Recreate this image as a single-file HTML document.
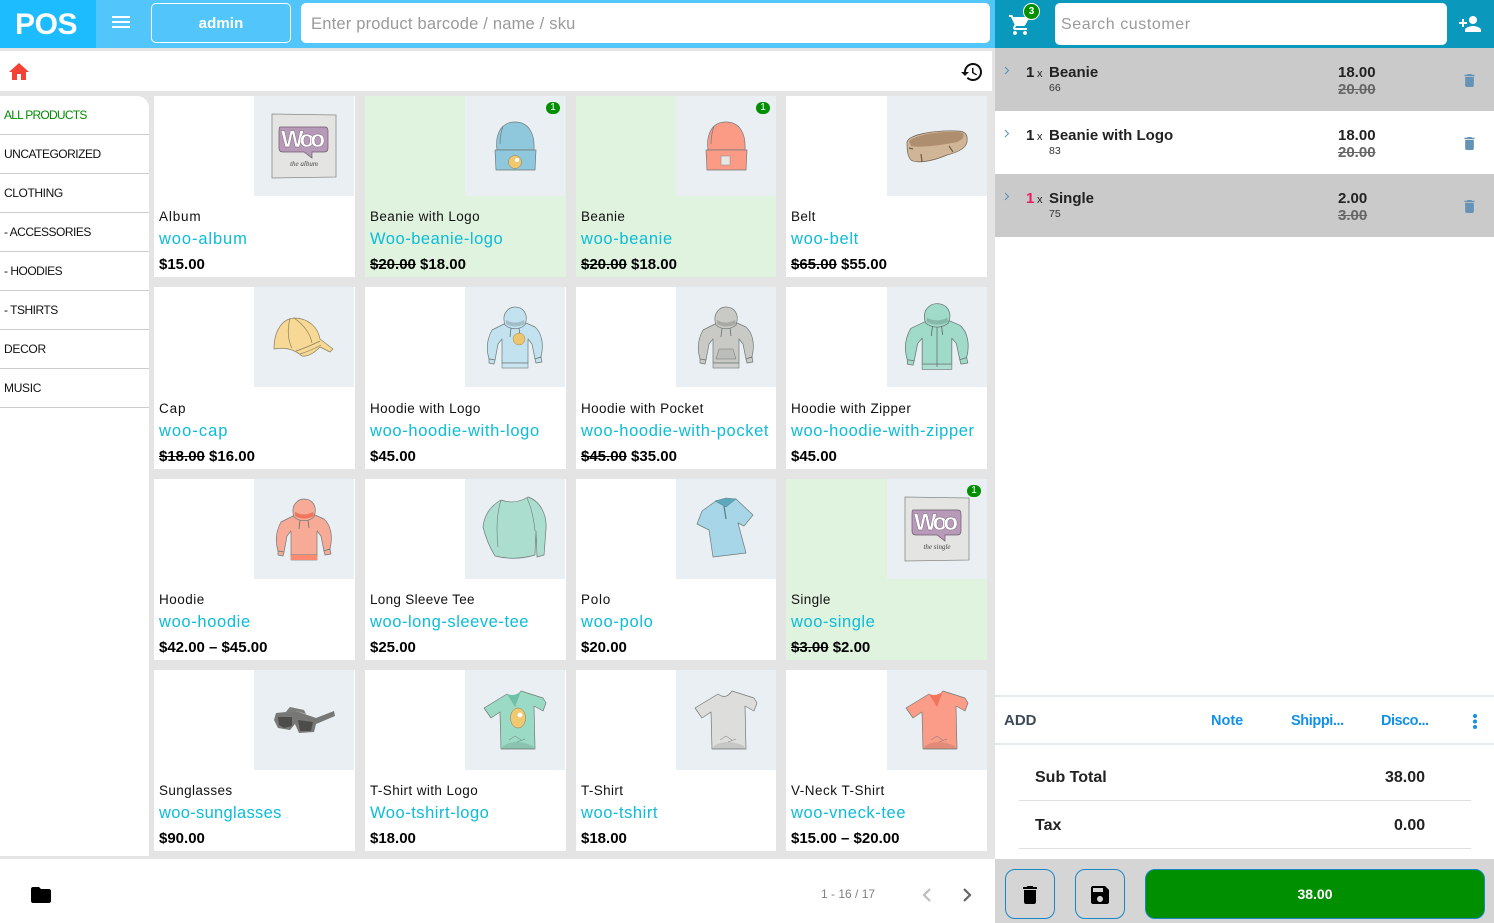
<!DOCTYPE html>
<html lang="en"><head><meta charset="utf-8"><title>POS</title>
<style>
*{box-sizing:border-box}
html,body{margin:0;padding:0;width:1494px;height:923px;overflow:hidden;background:#e4e4e4;font-family:"Liberation Sans",sans-serif;color:#000}
.a{position:absolute}
svg{display:block}
.side div{position:absolute;left:0;width:149px;height:39px;border-bottom:1px solid #ccc;font-size:12px;line-height:38px;padding-left:4px;color:#111;white-space:nowrap;letter-spacing:-.5px}
.card{position:absolute;background:#fff;overflow:hidden}
.card.g{background:#dff3df}
.card .im{position:absolute;right:0;top:0;width:100px;height:100px;background:#e9eff3}
.card .im svg{filter:blur(.3px)}
.c1 .im,.c2 .im{right:1px}
.card .n{position:absolute;left:5px;font-size:13.5px;line-height:18px;color:#111;white-space:nowrap;letter-spacing:.37px}
.card .s{position:absolute;left:5px;font-size:16.5px;line-height:22px;color:#0cbcd8;white-space:nowrap;letter-spacing:.6px}
.card .p{position:absolute;left:5px;font-size:15px;font-weight:700;line-height:18px;white-space:nowrap}
.r1 .n,.r3 .n,.r4 .n{top:112px}.r1 .s,.r3 .s,.r4 .s{top:132px}.r1 .p,.r3 .p,.r4 .p{top:160px}
.r2 .n{top:113px}.r2 .s{top:133px}.r2 .p{top:161px}
.bd{position:absolute;right:6px;top:6px;width:14px;height:12px;border-radius:6px;background:#008f00;color:#fff;font-size:10px;line-height:12px;text-align:center}
.rw{position:absolute;left:995px;width:499px;height:63px}
.rw .ch{position:absolute;left:9px;top:18px}
.rw .q{position:absolute;left:31px;top:16px;font-size:15px;font-weight:700;color:#222}
.rw .x{position:absolute;left:42px;top:20px;font-size:11px;color:#222}
.rw .t{position:absolute;left:54px;top:16px;font-size:15px;font-weight:700;color:#222;white-space:nowrap}
.rw .id{position:absolute;left:54px;top:34px;font-size:10.5px;color:#333}
.rw .pr{position:absolute;left:343px;top:16px;font-size:15px;font-weight:700;color:#222}
.rw .old{position:absolute;left:343px;top:33px;font-size:15px;font-weight:700;color:#666;text-decoration:line-through}
.rw .tr{position:absolute;left:468px;top:26px}
.lk{position:absolute;top:713px;font-size:14.5px;font-weight:700;color:#1390ea;white-space:nowrap}
</style></head><body>

<svg width="0" height="0" style="position:absolute">
<defs>
<symbol id="hood" viewBox="0 0 100 100">
<g stroke="#6f7a78" stroke-width=".7" fill="currentColor" stroke-linejoin="round">
<path d="M39 37 27 43C22 52 21 62 24 72L30 73 33 57 37 52 37 76H63L63 52 67 57 70 72 76 70C79 58 77 46 70 40L61 36Z"/>
<path d="M40 38C36 26 44 20 50 20 58 20 64 27 60 38 54 43 46 43 40 38Z"/>
<path d="M37 76H63V81H37Z" opacity=".85"/>
<path d="M24 72 30 73 29 77 24 76Z"/><path d="M70 72 76 70 77 75 71 76Z"/>
</g>
<path d="M41 33Q50 38 59 33L60 37Q50 42 41 37Z" fill="#000" opacity=".16"/>
<path d="M46 41 45 50M54 41 55 49" stroke="#66706f" stroke-width=".8" fill="none"/>
</symbol>
<symbol id="tee" viewBox="0 0 100 100">
<path d="M42 24Q50 30 56 21L78 28 81 33 78 41 69 36 70 79 36 79 35 42 26 48 19 38Z" fill="currentColor" stroke="#6f7a78" stroke-width=".7" stroke-linejoin="round"/>
<path d="M38 76Q50 68 68 76L69 79H37Z" fill="#000" opacity=".1"/>
<path d="M44 70 50 66 56 70M52 72 60 69" stroke="#6f7a78" stroke-width=".5" fill="none"/>
</symbol>
<symbol id="bean" viewBox="0 0 100 100">
<g fill="currentColor" stroke="#6f7a78" stroke-width=".7" stroke-linejoin="round">
<path d="M32 54C30 38 36 26 50 26 64 26 70 38 69 54Z"/>
<path d="M30 54H71L70 74H31Z"/>
</g>
<path d="M38 30C36 36 35 42 35 48" stroke="#6f7a78" stroke-width=".7" fill="none"/>
</symbol>
<symbol id="alb" viewBox="0 0 100 100">
<path d="M18 18 82 19 82 81 18 82Z" fill="#e4e4e2" stroke="#8a8a8a" stroke-width=".8"/>
<path d="M26 31H71Q74 31 74 35V52Q74 56 70 56H58L58 62 50 56H29Q25 56 25 52V35Q25 31 26 31Z" fill="#b79ab8" stroke="#6f5a70" stroke-width=".7"/>
</symbol>
</defs>
</svg>

<!-- left top bar -->
<div class="a" style="left:0;top:0;width:995px;height:48px;background:#52c6fa"></div>
<div class="a" style="left:0;top:1px;width:96px;height:48px;background:transparent;color:#fff;font-size:30px;font-weight:700;line-height:48px;padding-left:15px;letter-spacing:-.4px;z-index:2">POS</div>
<div class="a" style="left:0;top:0;width:96px;height:48px;background:#1dbbff"></div>
<svg class="a" style="left:109px;top:10px" width="24" height="24" viewBox="0 0 24 24" fill="#fff"><path d="M3 18h18v-2H3v2zm0-5h18v-2H3v2zm0-7v2h18V6H3z"/></svg>
<div class="a" style="left:151px;top:3px;width:140px;height:40px;border:1px solid #fff;border-radius:5px;color:#fff;font-size:15px;font-weight:700;text-align:center;line-height:40px;letter-spacing:.1px">admin</div>
<div class="a" style="left:301px;top:3px;width:689px;height:40px;background:#fff;border-radius:5px;color:#9a9a9a;font-size:16.5px;line-height:43px;padding-left:10px;letter-spacing:.2px">Enter product barcode / name / sku</div>

<!-- toolbar -->
<div class="a" style="left:0;top:51px;width:992px;height:40px;background:#fff"></div>
<svg class="a" style="left:7px;top:60px" width="24" height="24" viewBox="0 0 24 24" fill="#f44336"><path d="M10 20v-6h4v6h5v-8h3L12 3 2 12h3v8z"/></svg>
<svg class="a" style="left:960px;top:60px" width="24" height="24" viewBox="0 0 24 24" fill="#111"><path d="M13 3c-4.97 0-9 4.03-9 9H1l3.89 3.89.07.14L9 12H6c0-3.87 3.13-7 7-7s7 3.13 7 7-3.13 7-7 7c-1.93 0-3.68-.79-4.94-2.06l-1.42 1.42C8.27 19.99 10.51 21 13 21c4.97 0 9-4.03 9-9s-4.03-9-9-9zm-1 5v5l4.28 2.54.72-1.21-3.5-2.08V8H12z"/></svg>

<!-- sidebar -->
<div class="a side" style="left:0;top:96px;width:149px;height:760px;background:#fff;border-radius:0 12px 0 0">
<div style="top:0;color:#008a00;letter-spacing:-.75px">ALL PRODUCTS</div>
<div style="top:39px">UNCATEGORIZED</div>
<div style="top:78px;letter-spacing:-.4px">CLOTHING</div>
<div style="top:117px">- ACCESSORIES</div>
<div style="top:156px">- HOODIES</div>
<div style="top:195px">- TSHIRTS</div>
<div style="top:234px;letter-spacing:-.3px">DECOR</div>
<div style="top:273px;letter-spacing:-.3px">MUSIC</div>
</div>

<!-- Row 1 -->
<div class="card c1 r1" style="left:154px;top:96px;width:201px;height:181px"><div class="im"><svg width="100" height="100"><use href="#alb" width="100" height="100"/><text x="49" y="51" font-size="24" font-weight="700" fill="#fff" stroke="#6f5a70" stroke-width=".4" text-anchor="middle" font-family="Liberation Sans" textLength="44">Woo</text><text x="50" y="70" font-size="7" fill="#444" text-anchor="middle" font-family="Liberation Serif" font-style="italic">the album</text></svg></div><div class="n" style="letter-spacing:.85px">Album</div><div class="s" style="letter-spacing:.89px">woo-album</div><div class="p">$15.00</div></div>

<div class="card c2 g r1" style="left:365px;top:96px;width:201px;height:181px"><div class="im"><svg width="100" height="100" style="color:#8fc7dc"><use href="#bean" width="100" height="100"/><circle cx="50" cy="66" r="6.5" fill="#f0c870" stroke="#8a7a50" stroke-width=".5"/><circle cx="52" cy="64" r="2" fill="#fff"/></svg></div><div class="bd">1</div><div class="n" style="letter-spacing:.4px">Beanie with Logo</div><div class="s" style="letter-spacing:.52px">Woo-beanie-logo</div><div class="p"><s>$20.00</s> $18.00</div></div>

<div class="card g r1" style="left:576px;top:96px;width:200px;height:181px"><div class="im"><svg width="100" height="100" style="color:#fb9b86"><use href="#bean" width="100" height="100"/><rect x="45" y="60" width="9" height="9" fill="#e6e6e2" stroke="#888" stroke-width=".5"/></svg></div><div class="bd">1</div><div class="n">Beanie</div><div class="s" style="letter-spacing:.65px">woo-beanie</div><div class="p"><s>$20.00</s> $18.00</div></div>

<div class="card r1" style="left:786px;top:96px;width:201px;height:181px"><div class="im"><svg width="100" height="100"><path d="M20 46C22 38 50 34 70 35 78 35 81 38 80 46 79 52 72 56 60 59 46 65 30 68 24 64 20 60 20 52 20 46Z" fill="#d0b596" stroke="#6d5f50" stroke-width=".7"/><path d="M22 45C30 38 55 35 72 36 79 37 78 43 70 46 55 49 35 52 24 50Z" fill="#ad8e6e"/><path d="M22 52 26 53M34 58 35 66M62 50 66 56" stroke="#6d5f50" stroke-width="1.2" fill="none"/></svg></div><div class="n">Belt</div><div class="s" style="letter-spacing:.7px">woo-belt</div><div class="p"><s>$65.00</s> $55.00</div></div>

<!-- Row 2 -->
<div class="card c1 r2" style="left:154px;top:287px;width:201px;height:182px"><div class="im"><svg width="100" height="100"><path d="M20 62C20 44 28 32 40 31 54 31 64 40 66 52L79 62 76 65 66 60C60 66 54 70 48 69 40 62 30 60 20 62Z" fill="#f7d894" stroke="#8a7f62" stroke-width=".7" stroke-linejoin="round"/><path d="M36 32C33 42 34 54 38 61M40 31C50 38 56 46 58 56M42 64Q54 60 66 54M46 67Q56 64 67 58" stroke="#8a7f62" stroke-width=".7" fill="none"/></svg></div><div class="n" style="letter-spacing:.9px">Cap</div><div class="s" style="letter-spacing:1.02px">woo-cap</div><div class="p"><s>$18.00</s> $16.00</div></div>

<div class="card c2 r2" style="left:365px;top:287px;width:201px;height:182px"><div class="im"><svg width="100" height="100" style="color:#c3e2f0"><use href="#hood" width="100" height="100"/><circle cx="54" cy="52" r="6" fill="#eec56f" stroke="#8a7a50" stroke-width=".4"/></svg></div><div class="n" style="letter-spacing:.4px">Hoodie with Logo</div><div class="s" style="letter-spacing:.65px">woo-hoodie-with-logo</div><div class="p">$45.00</div></div>

<div class="card r2" style="left:576px;top:287px;width:200px;height:182px"><div class="im"><svg width="100" height="100" style="color:#c9c9c5"><use href="#hood" width="100" height="100"/><path d="M40 72 43 62H57L60 72Z" fill="#bcbcb8" stroke="#6f7a78" stroke-width=".5"/></svg></div><div class="n" style="letter-spacing:.4px">Hoodie with Pocket</div><div class="s" style="letter-spacing:.63px">woo-hoodie-with-pocket</div><div class="p"><s>$45.00</s> $35.00</div></div>

<div class="card r2" style="left:786px;top:287px;width:201px;height:182px"><div class="im"><svg width="100" height="100" style="color:#a0dbc9"><g transform="translate(-7 -5) scale(1.14 1.08)"><use href="#hood" width="100" height="100"/></g><path d="M50 40V80" stroke="#6f7a78" stroke-width=".9"/></svg></div><div class="n" style="letter-spacing:.43px">Hoodie with Zipper</div><div class="s" style="letter-spacing:.59px">woo-hoodie-with-zipper</div><div class="p">$45.00</div></div>

<!-- Row 3 -->
<div class="card c1 r3" style="left:154px;top:479px;width:201px;height:181px"><div class="im"><svg width="100" height="100" style="color:#f7ab96"><use href="#hood" width="100" height="100"/><path d="M37 76H63V81H37Z" fill="#fb8a70"/><path d="M41 33Q50 38 59 33L60 37Q50 42 41 37Z" fill="#f0755c"/></svg></div><div class="n" style="letter-spacing:.5px">Hoodie</div><div class="s" style="letter-spacing:.65px">woo-hoodie</div><div class="p">$42.00 – $45.00</div></div>

<div class="card c2 r3" style="left:365px;top:479px;width:201px;height:181px"><div class="im"><svg width="100" height="100"><path d="M36 21Q50 26 63 18C75 22 82 35 81 50L79 76 72 78 71 52 70 76Q50 82 30 77 22 64 18 48 20 30 36 21Z" fill="#abdecf" stroke="#6f7a78" stroke-width=".7" stroke-linejoin="round"/><path d="M36 21Q30 40 33 68M62 19Q68 32 70 52" stroke="#6f7a78" stroke-width=".6" fill="none"/></svg></div><div class="n" style="letter-spacing:.3px">Long Sleeve Tee</div><div class="s" style="letter-spacing:.55px">woo-long-sleeve-tee</div><div class="p">$25.00</div></div>

<div class="card r3" style="left:576px;top:479px;width:200px;height:181px"><div class="im"><svg width="100" height="100"><path d="M40 22 26 32 21 45 33 51 37 78 70 74 62 44 68 47 77 36 60 20Z" fill="#a6d6e7" stroke="#6f7a78" stroke-width=".7" stroke-linejoin="round"/><path d="M39 22 50 19 60 20 50 28Z" fill="#5ea8bd" stroke="#5a7a80" stroke-width=".5"/><path d="M48 27 50 40" stroke="#5a7a80" stroke-width="1.2"/></svg></div><div class="n" style="letter-spacing:.75px">Polo</div><div class="s" style="letter-spacing:.7px">woo-polo</div><div class="p">$20.00</div></div>

<div class="card g r3" style="left:786px;top:479px;width:201px;height:181px"><div class="im"><svg width="100" height="100"><use href="#alb" width="100" height="100"/><text x="49" y="51" font-size="24" font-weight="700" fill="#fff" stroke="#6f5a70" stroke-width=".4" text-anchor="middle" font-family="Liberation Sans" textLength="44">Woo</text><text x="50" y="70" font-size="7" fill="#444" text-anchor="middle" font-family="Liberation Serif" font-style="italic">the single</text></svg></div><div class="bd">1</div><div class="n">Single</div><div class="s" style="letter-spacing:.55px">woo-single</div><div class="p"><s>$3.00</s> $2.00</div></div>

<!-- Row 4 -->
<div class="card c1 r4" style="left:154px;top:670px;width:201px;height:181px"><div class="im"><svg width="100" height="100"><path d="M22 43 42 41 62 48 80 41 81 46 62 54 60 62 45 63 41 54 36 60 24 58 20 50Z" fill="#777775"/><path d="M30 44 36 37 50 40 52 44 42 41Z" fill="#7c7c7a"/><path d="M24 47 38 47 38 56 30 58 25 55ZM44 50 59 52 57 61 46 61Z" fill="#4c4c4b"/></svg></div><div class="n" style="letter-spacing:.37px">Sunglasses</div><div class="s" style="letter-spacing:.31px">woo-sunglasses</div><div class="p">$90.00</div></div>

<div class="card c2 r4" style="left:365px;top:670px;width:201px;height:181px"><div class="im"><svg width="100" height="100" style="color:#9bdac4"><use href="#tee" width="100" height="100"/><path d="M42 24 50 37 56 21Q50 27 42 24Z" fill="#6fc0a6"/><ellipse cx="53" cy="48" rx="7.5" ry="10" fill="#f0c870" stroke="#8a7a50" stroke-width=".5"/><circle cx="55" cy="45" r="2.4" fill="#fff"/></svg></div><div class="n" style="letter-spacing:.4px">T-Shirt with Logo</div><div class="s" style="letter-spacing:.52px">Woo-tshirt-logo</div><div class="p">$18.00</div></div>

<div class="card r4" style="left:576px;top:670px;width:200px;height:181px"><div class="im"><svg width="100" height="100" style="color:#dddddb"><use href="#tee" width="100" height="100"/></svg></div><div class="n">T-Shirt</div><div class="s" style="letter-spacing:.55px">woo-tshirt</div><div class="p">$18.00</div></div>

<div class="card r4" style="left:786px;top:670px;width:201px;height:181px"><div class="im"><svg width="100" height="100" style="color:#fa9c87"><use href="#tee" width="100" height="100"/><path d="M42 24 50 37 56 21Q50 27 42 24Z" fill="#f0755c"/></svg></div><div class="n" style="letter-spacing:.5px">V-Neck T-Shirt</div><div class="s">woo-vneck-tee</div><div class="p">$15.00 – $20.00</div></div>

<!-- left footer -->
<div class="a" style="left:0;top:859px;width:995px;height:64px;background:#fff"></div>
<svg class="a" style="left:29px;top:883px" width="24" height="24" viewBox="0 0 24 24" fill="#000"><path d="M10 4H4c-1.100 0-1.990.9-1.990 2L2 18c0 1.100.9 2 2 2h16c1.100 0 2-.9 2-2V8c0-1.100-.9-2-2-2h-8l-2-2z"/></svg>
<div class="a" style="left:821px;top:887px;font-size:12px;color:#808080;white-space:nowrap">1 - 16 / 17</div>
<svg class="a" style="left:920px;top:887px" width="14" height="16" viewBox="0 0 14 16" fill="none" stroke="#bdbdbd" stroke-width="2.2"><path d="M10 2 4 8l6 6"/></svg>
<svg class="a" style="left:960px;top:887px" width="14" height="16" viewBox="0 0 14 16" fill="none" stroke="#666" stroke-width="2.2"><path d="M4 2l6 6-6 6"/></svg>

<!-- right panel -->
<div class="a" style="left:995px;top:0;width:499px;height:859px;background:#fff"></div>
<div class="a" style="left:995px;top:0;width:499px;height:48px;background:#0a98bd"></div>
<svg class="a" style="left:1008px;top:13px" width="24" height="24" viewBox="0 0 24 24" fill="#fff"><path d="M7 18c-1.100 0-1.990.9-1.990 2S5.900 22 7 22s2-.9 2-2-.9-2-2-2zM1 2v2h2l3.600 7.590-1.350 2.450c-.16.28-.25.61-.25.96 0 1.100.9 2 2 2h12v-2H7.420c-.14 0-.25-.11-.25-.25l.03-.12.9-1.630h7.450c.75 0 1.410-.41 1.750-1.030l3.580-6.490c.08-.14.12-.31.12-.48 0-.55-.45-1-1-1H5.210l-.94-2H1zm16 16c-1.100 0-1.990.9-1.990 2s.89 2 1.990 2 2-.9 2-2-.9-2-2-2z"/></svg>
<div class="a" style="left:1023px;top:3px;width:17px;height:17px;border-radius:50%;background:#008f00;border:1px solid #fff;color:#fff;font-size:10px;font-weight:700;line-height:15px;text-align:center">3</div>
<div class="a" style="left:1055px;top:3px;width:392px;height:42px;background:#fff;border-radius:5px;color:#9a9a9a;font-size:16px;line-height:44px;padding-left:6px;letter-spacing:.58px">Search customer</div>
<svg class="a" style="left:1458px;top:12px" width="24" height="24" viewBox="0 0 24 24" fill="#fff"><path d="M15 12c2.210 0 4-1.790 4-4s-1.790-4-4-4-4 1.790-4 4 1.790 4 4 4zm-9-2V7H4v3H1v2h3v3h2v-3h3v-2H6zm9 4c-2.670 0-8 1.340-8 4v2h16v-2c0-2.660-5.330-4-8-4z"/></svg>

<div class="rw" style="top:48px;background:#cacaca">
<svg class="ch" width="6" height="9" viewBox="0 0 6 9" fill="none" stroke="#5c8fb5" stroke-width="1"><path d="M1 1l3.500 3.500L1 8"/></svg>
<div class="q">1</div><div class="x">x</div><div class="t">Beanie</div><div class="id">66</div><div class="pr">18.00</div><div class="old">20.00</div>
<svg class="tr" width="13" height="13" viewBox="3 3 18 18" fill="#6592b5"><path d="M6 19c0 1.100.9 2 2 2h8c1.100 0 2-.9 2-2V7H6v12zM19 4h-3.500l-1-1h-5l-1 1H5v2h14V4z"/></svg>
</div>
<div class="rw" style="top:111px;background:#fff">
<svg class="ch" width="6" height="9" viewBox="0 0 6 9" fill="none" stroke="#5c8fb5" stroke-width="1"><path d="M1 1l3.500 3.500L1 8"/></svg>
<div class="q">1</div><div class="x">x</div><div class="t">Beanie with Logo</div><div class="id">83</div><div class="pr">18.00</div><div class="old">20.00</div>
<svg class="tr" width="13" height="13" viewBox="3 3 18 18" fill="#6592b5"><path d="M6 19c0 1.100.9 2 2 2h8c1.100 0 2-.9 2-2V7H6v12zM19 4h-3.500l-1-1h-5l-1 1H5v2h14V4z"/></svg>
</div>
<div class="rw" style="top:174px;background:#cacaca">
<svg class="ch" width="6" height="9" viewBox="0 0 6 9" fill="none" stroke="#5c8fb5" stroke-width="1"><path d="M1 1l3.500 3.500L1 8"/></svg>
<div class="q" style="color:#e91e63">1</div><div class="x">x</div><div class="t">Single</div><div class="id">75</div><div class="pr">2.00</div><div class="old">3.00</div>
<svg class="tr" width="13" height="13" viewBox="3 3 18 18" fill="#6592b5"><path d="M6 19c0 1.100.9 2 2 2h8c1.100 0 2-.9 2-2V7H6v12zM19 4h-3.500l-1-1h-5l-1 1H5v2h14V4z"/></svg>
</div>

<!-- add bar -->
<div class="a" style="left:995px;top:695px;width:499px;height:2px;background:#e6ebf0"></div>
<div class="a" style="left:995px;top:743px;width:499px;height:2px;background:#e6ebf0"></div>
<div class="a" style="left:1004px;top:712px;font-size:15px;font-weight:700;color:#3c4a58">ADD</div>
<div class="lk" style="left:1211px">Note</div>
<div class="lk" style="left:1291px;letter-spacing:-.4px">Shippi...</div>
<div class="lk" style="left:1381px;letter-spacing:-.5px">Disco...</div>
<svg class="a" style="left:1471px;top:713px" width="8" height="17" viewBox="0 0 8 17" fill="#1390ea"><circle cx="4" cy="3" r="2"/><circle cx="4" cy="8.5" r="2"/><circle cx="4" cy="14" r="2"/></svg>

<!-- totals -->
<div class="a" style="left:1035px;top:769px;font-size:16px;font-weight:700;color:#222">Sub Total</div>
<div class="a" style="left:1385px;top:769px;font-size:16px;font-weight:700;color:#222">38.00</div>
<div class="a" style="left:1019px;top:800px;width:452px;height:1px;background:#dfdfdf"></div>
<div class="a" style="left:1035px;top:817px;font-size:16px;font-weight:700;color:#222">Tax</div>
<div class="a" style="left:1394px;top:817px;font-size:16px;font-weight:700;color:#222">0.00</div>
<div class="a" style="left:1019px;top:848px;width:452px;height:1px;background:#dfdfdf"></div>

<!-- right footer -->
<div class="a" style="left:995px;top:859px;width:499px;height:64px;background:#d5d5d5"></div>
<div class="a" style="left:1005px;top:869px;width:50px;height:50px;border:1px solid #1a87c4;border-radius:10px"></div>
<svg class="a" style="left:1018px;top:883px" width="24" height="24" viewBox="0 0 24 24" fill="#000"><path d="M6 19c0 1.100.9 2 2 2h8c1.100 0 2-.9 2-2V7H6v12zM19 4h-3.500l-1-1h-5l-1 1H5v2h14V4z"/></svg>
<div class="a" style="left:1075px;top:869px;width:50px;height:50px;border:1px solid #1a87c4;border-radius:10px"></div>
<svg class="a" style="left:1088px;top:883px" width="24" height="24" viewBox="0 0 24 24" fill="#000"><path d="M17 3H5c-1.110 0-2 .9-2 2v14c0 1.100.89 2 2 2h14c1.100 0 2-.9 2-2V7l-4-4zm-5 16c-1.660 0-3-1.340-3-3s1.340-3 3-3 3 1.340 3 3-1.340 3-3 3zm3-10H5V5h10v4z"/></svg>
<div class="a" style="left:1145px;top:869px;width:340px;height:50px;background:#008f00;border:1px solid #1a87c4;border-radius:10px;color:#fff;font-size:14px;font-weight:700;text-align:center;line-height:48px">38.00</div>

</body></html>
